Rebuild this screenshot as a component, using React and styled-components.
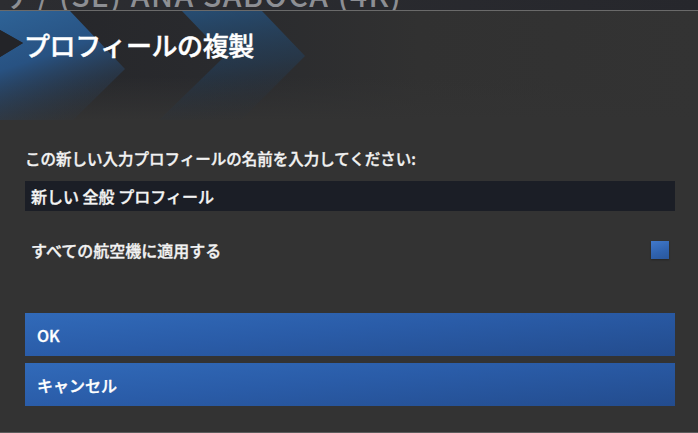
import styled, { createGlobalStyle } from "styled-components";

const GlobalStyle = createGlobalStyle`
  html, body {
    margin: 0;
    padding: 0;
    background: #2a2b30;
  }
  body {
    font-family: "Noto Sans CJK JP", "Noto Sans", sans-serif;
    color: #f2f2f2;
  }
`;

const Page = styled.div`
  width: 698px;
  height: 433px;
  display: flex;
  flex-direction: column;
  overflow: hidden;
`;

const BackdropStrip = styled.div`
  height: 10px;
  overflow: hidden;
  background: linear-gradient(90deg, #2c2d31, #26272c);
  flex: none;
`;

const BackdropTitle = styled.div`
  margin-top: -23px;
  margin-left: 6px;
  font-family: "Noto Sans CJK JP", "Noto Sans", sans-serif;
  font-size: 30px;
  line-height: 34px;
  font-weight: 500;
  letter-spacing: 1.5px;
  color: #8d8f94;
  white-space: nowrap;
`;

const Dialog = styled.div`
  flex: 1;
  background: #333333;
  border-top: 1px solid #6a6a6a;
  border-bottom: 1px solid #5c5c5c;
  display: flex;
  flex-direction: column;
`;

const Header = styled.div`
  position: relative;
  height: 109px;
  padding: 17px 0 0 24px;
  box-sizing: border-box;
  background:
    linear-gradient(180deg, rgba(51, 51, 51, 0) 60%, #333333 100%),
    linear-gradient(90deg, #25262a 0%, #2a2b2e 35%, #313131 60%, #333333 100%);
  overflow: hidden;
  flex: none;
`;

const Decoration = styled.svg`
  position: absolute;
  left: 0;
  top: 0;
`;

const Title = styled.h1`
  position: relative;
  margin: 0;
  font-size: 26px;
  line-height: 34px;
  font-weight: 500;
  -webkit-text-stroke: 0.45px #ffffff;
  color: #ffffff;
  letter-spacing: -0.4px;
`;

const Body = styled.div`
  padding: 28px 23px 0 25px;
  display: flex;
  flex-direction: column;
  -webkit-text-stroke: 0.35px currentColor;
`;

const Label = styled.div`
  font-size: 15.5px;
  line-height: 20px;
  font-weight: 500;
  color: #f2f2f2;
`;

const NameField = styled.div`
  margin-top: 13px;
  height: 30px;
  background: #1b1e26;
  display: flex;
  align-items: center;
  padding-left: 6px;
  font-size: 16px;
  font-weight: 500;
  color: #f4f4f4;
`;

const OptionRow = styled.div`
  margin-top: 20px;
  height: 38px;
  padding: 0 6px;
  display: flex;
  align-items: center;
  justify-content: space-between;
  font-size: 16px;
  font-weight: 500;
`;

const CheckBox = styled.div`
  width: 18px;
  height: 18px;
  background: linear-gradient(160deg, #4179cb 0%, #2f62ae 60%, #2a579c 100%);
  box-shadow: 0 1px 2px rgba(0, 0, 0, 0.3);
`;

const Buttons = styled.div`
  margin-top: 44px;
  display: flex;
  flex-direction: column;
  gap: 7px;
`;

const Button = styled.div`
  height: 43px;
  display: flex;
  align-items: center;
  padding-left: 12px;
  font-size: 16px;
  font-weight: 500;
  color: #ffffff;
  background: linear-gradient(175deg, #316ab9 0%, #2a5ca8 45%, #234c8e 100%);
`;

function Chevrons() {
  return (
    <Decoration width="340" height="109" viewBox="0 0 340 109">
      <defs>
        <linearGradient id="chevA" x1="0" y1="0" x2="0.35" y2="1">
          <stop offset="0" stopColor="#2e6397" />
          <stop offset="0.45" stopColor="#285282" />
          <stop offset="1" stopColor="#2b3a4c" stopOpacity="0.1" />
        </linearGradient>
        <linearGradient id="chevB" x1="0.3" y1="0" x2="0.5" y2="1">
          <stop offset="0" stopColor="#26527d" stopOpacity="0.85" />
          <stop offset="0.5" stopColor="#233f5c" stopOpacity="0.55" />
          <stop offset="1" stopColor="#2a2d33" stopOpacity="0" />
        </linearGradient>
      </defs>
      <polygon
        points="0,0 70,0 125,58 64,118 0,118 0,46 23,32 0,19"
        fill="url(#chevA)"
      />
      <polygon points="0,19 23,32 0,46" fill="#232428" />
      <polygon
        points="182,0 262,0 305,45 232,118 150,118 225,45"
        fill="url(#chevB)"
      />
    </Decoration>
  );
}

export default function App() {
  return (
    <Page>
      <GlobalStyle />
      <BackdropStrip>
        <BackdropTitle>ア/ (SE) ANA SABOCA (4K)</BackdropTitle>
      </BackdropStrip>
      <Dialog>
        <Header>
          <Chevrons />
          <Title>プロフィールの複製</Title>
        </Header>
        <Body>
          <Label>この新しい入力プロフィールの名前を入力してください:</Label>
          <NameField>新しい 全般 プロフィール</NameField>
          <OptionRow>
            <span>すべての航空機に適用する</span>
            <CheckBox />
          </OptionRow>
          <Buttons>
            <Button>OK</Button>
            <Button>キャンセル</Button>
          </Buttons>
        </Body>
      </Dialog>
    </Page>
  );
}
